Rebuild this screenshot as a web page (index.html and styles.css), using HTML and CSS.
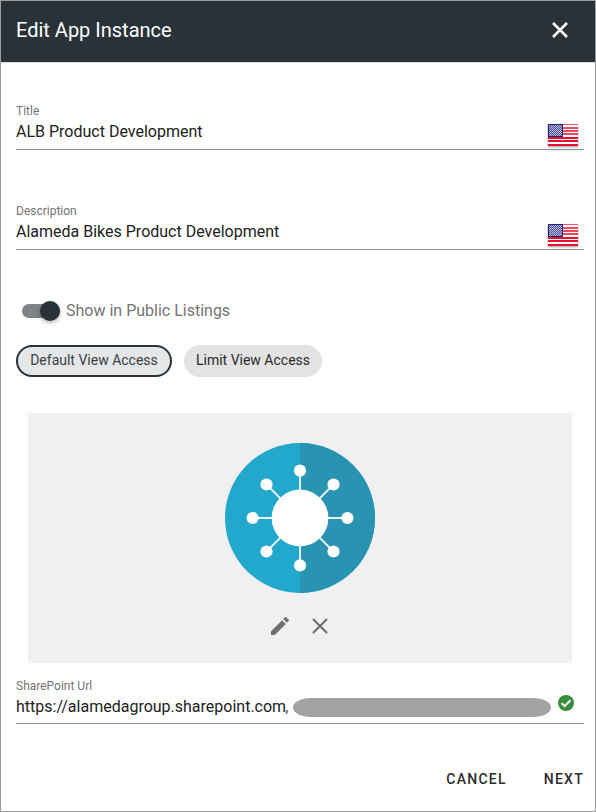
FILE: index.html
```html
<!DOCTYPE html>
<html lang="en">
<head>
<meta charset="utf-8">
<title>Edit App Instance</title>
<link rel="stylesheet" href="styles.css">
</head>
<body>
<svg width="0" height="0" class="defs">
  <defs>
    <pattern id="stars" width="2" height="2" patternUnits="userSpaceOnUse">
      <rect width="2" height="2" fill="#4b4d99"/>
      <rect width="1" height="1" fill="#c3c4df"/>
      <rect x="1" y="1" width="1" height="1" fill="#b5b6d8"/>
    </pattern>
    <linearGradient id="gloss" x1="0" y1="0" x2="0" y2="1">
      <stop offset="0" stop-color="#fff" stop-opacity=".28"/>
      <stop offset="1" stop-color="#fff" stop-opacity=".22"/>
    </linearGradient>
    <symbol id="us-flag" viewBox="0 0 30 22">
      <rect width="30" height="22" fill="#fff"/>
      <path fill="#e8112d" d="M0 0h30v1H0zM0 3h30v2H0zM0 6h30v2H0zM0 9h30v2H0zM0 13h30v2H0zM0 16h30v2H0zM0 20h30v2H0z"/>
      <rect x="15" width="15" height="11" fill="url(#gloss)"/>
      <rect width="15" height="13" fill="#20207c"/>
      <rect x="1" y="1" width="13" height="11" fill="url(#stars)"/>
    </symbol>
  </defs>
</svg>
<main class="dialog">
  <header class="header">
    <h1 class="heading">Edit App Instance</h1>
    <svg class="close" viewBox="0 0 16 16"><path d="M1 1l14 14M15 1L1 15"/></svg>
  </header>
  <section class="field title">
    <div class="copy"><div class="label">Title</div><div class="value">ALB Product Development</div></div>
    <svg class="flag"><use href="#us-flag"/></svg>
  </section>
  <section class="field description">
    <div class="copy"><div class="label">Description</div><div class="value">Alameda Bikes Product Development</div></div>
    <svg class="flag"><use href="#us-flag"/></svg>
  </section>
  <div class="switch-row">
    <span class="switch"><span class="thumb"></span></span>
    <span class="switch-label">Show in Public Listings</span>
  </div>
  <div class="chips">
    <span class="chip selected">Default View Access</span>
    <span class="chip">Limit View Access</span>
  </div>
  <section class="picture">
    <svg class="emblem" viewBox="-75 -75 150 150">
      <circle r="75" fill="#22a7cd"/>
      <path d="M0-75a75 75 0 0 1 0 150z" fill="#2993b2"/>
      <path d="M0-47V47M-47 0H47M-33.5-33.5l67 67M33.5-33.5l-67 67" stroke="#e8f6fa" stroke-width="1.9"/>
      <g fill="#fff">
        <circle r="28.4"/>
        <circle cy="-47.4" r="6.1"/><circle cy="47.4" r="6.1"/>
        <circle cx="-47.4" r="6.1"/><circle cx="47.4" r="6.1"/>
        <circle cx="-33.5" cy="-33.5" r="6.1"/><circle cx="33.5" cy="-33.5" r="6.1"/>
        <circle cx="-33.5" cy="33.5" r="6.1"/><circle cx="33.5" cy="33.5" r="6.1"/>
      </g>
    </svg>
    <div class="tools">
      <svg class="tool" viewBox="0 0 24 24"><path fill="#707070" d="M20.71 7.04c.39-.39.39-1.04 0-1.41l-2.34-2.34c-.37-.39-1.02-.39-1.41 0l-1.84 1.83 3.75 3.75M3 17.25V21h3.75L17.81 9.93l-3.75-3.75L3 17.25z"/></svg>
      <svg class="tool" viewBox="0 0 24 24"><path class="remove" d="M5 5l14 14M19 5L5 19"/></svg>
    </div>
  </section>
  <section class="field url">
    <div class="copy"><div class="label">SharePoint Url</div><div class="value">https://alamedagroup.sharepoint.com<span class="tail">,</span></div></div>
    <span class="mask"></span>
    <svg class="check" viewBox="0 0 16 16"><circle cx="8" cy="8" r="8" fill="#388e3c"/><path d="M3.6 8.1l3 3 5.8-5.8"/></svg>
  </section>
  <footer class="actions"><span class="action">CANCEL</span><span class="action">NEXT</span></footer>
</main>
</body>
</html>
```

FILE: styles.css
```css
* { box-sizing: border-box; }
body { margin: 0; font-family: Roboto, sans-serif; background: #fff; }
svg { display: block; flex: none; }
.defs { position: absolute; }
.dialog { width: 596px; height: 812px; border: 1px solid #9e9e9e; display: flex; flex-direction: column; overflow: hidden; }
.header { height: 62px; flex: none; display: flex; align-items: center; justify-content: space-between; padding: 0 27px 3px 15px; background: #293238; border-bottom: 1px solid #d9dcde; }
.heading { margin: 0; font-size: 20px; line-height: 24px; font-weight: 400; color: #fff; }
.close { width: 16px; height: 16px; fill: none; stroke: #fff; stroke-width: 2.5; }
.field { height: 49px; flex: none; margin: 0 11px 0 15px; border-bottom: 1px solid #8e8e8e; display: flex; }
.title { margin-top: 38px; justify-content: space-between; }
.description { margin-top: 51px; justify-content: space-between; }
.copy { padding-top: 2px; white-space: nowrap; }
.label { font-size: 12px; line-height: 16px; color: #747474; }
.value { font-size: 16px; line-height: 24px; margin-top: 1px; color: #212121; }
.tail { margin-left: -1px; color: #555; }
.flag { width: 30px; height: 22px; margin: 23px 6px 0 0; box-shadow: 0 1px 2px rgba(0,0,0,.4); }
.switch-row { height: 24px; flex: none; margin: 49px 0 0 21px; display: flex; align-items: center; }
.switch { width: 38px; height: 14px; border-radius: 7px; background: #7f8487; display: flex; align-items: center; justify-content: flex-end; margin-right: 6px; }
.thumb { width: 20px; height: 20px; border-radius: 50%; background: #293238; box-shadow: 0 2px 4px rgba(0,0,0,.3); }
.switch-label { font-size: 16px; line-height: 20px; color: #747474; white-space: nowrap; }
.chips { display: flex; flex: none; gap: 12px; margin: 22px 0 0 15px; }
.chip { width: 138px; height: 32px; border-radius: 16px; background: #e3e3e3; color: #2a2a2a; font-size: 14px; line-height: 30px; text-align: center; white-space: nowrap; }
.selected { width: 156px; border: 2px solid #293238; background: #e4e6e7; color: #394147; line-height: 26px; }
.picture { width: 544px; height: 250px; flex: none; margin: 36px 0 0 27px; background: #f0f0f0; padding-top: 30px; display: flex; flex-direction: column; align-items: center; }
.emblem { width: 150px; height: 150px; }
.tools { display: flex; gap: 16px; margin-top: 21px; }
.tool { width: 24px; height: 24px; }
.remove { fill: none; stroke: #6c6c6c; stroke-width: 2; }
.url { height: 48px; margin-top: 13px; }
.url .copy { width: 277px; }
.mask { width: 258px; height: 19px; border-radius: 18px / 9.5px; background: #a3a3a3; margin-top: 22px; }
.check { width: 16px; height: 16px; margin: 19px 0 0 7px; }
.check path { fill: none; stroke: #fff; stroke-width: 2; }
.actions { display: flex; justify-content: flex-end; margin: 47px 11px 0 0; gap: 37px; }
.action { font-size: 14px; line-height: 16px; font-weight: 500; letter-spacing: 1.25px; color: #2c2c2c; }
```
